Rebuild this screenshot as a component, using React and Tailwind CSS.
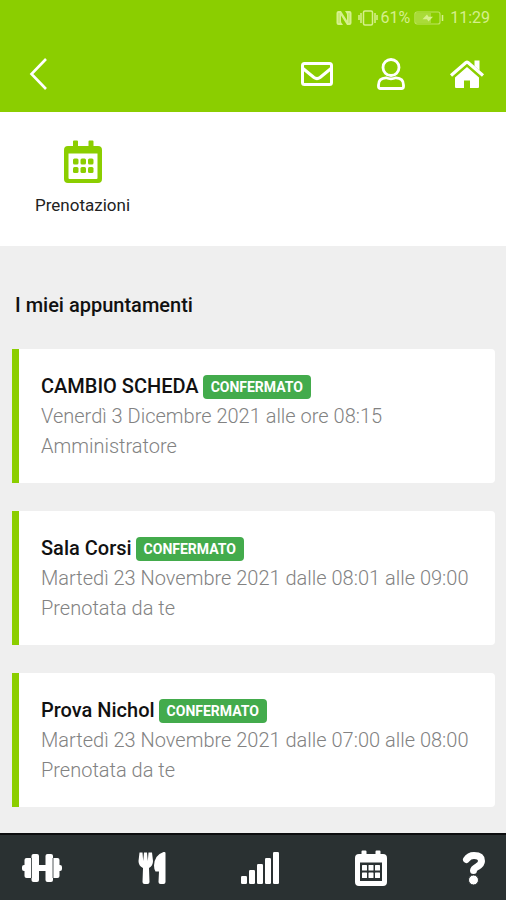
import React from 'react';

const appointments = [
  {
    id: 1,
    title: 'CAMBIO SCHEDA',
    status: 'CONFERMATO',
    when: 'Venerdì 3 Dicembre 2021 alle ore 08:15',
    who: 'Amministratore'
  },
  {
    id: 2,
    title: 'Sala Corsi',
    status: 'CONFERMATO',
    when: 'Martedì 23 Novembre 2021 dalle 08:01 alle 09:00',
    who: 'Prenotata da te'
  },
  {
    id: 3,
    title: 'Prova Nichol',
    status: 'CONFERMATO',
    when: 'Martedì 23 Novembre 2021 dalle 07:00 alle 08:00',
    who: 'Prenotata da te'
  }
];

// Status bar icons
function NfcIcon() {
  return (
    <svg viewBox="0 0 16 16" className="w-4 h-4" fill="currentColor">
      <path d="M2.500 1H5l6 9.500V5q0-1.500-1-2.500L9 1h4.500Q15.500 1 15.500 3v10q0 2-2 2H11L5 5.500V11q0 1.500 1 2.500L7 15H2.500q-2 0-2-2V3q0-2 2-2z" />
      <path d="M3 3v10M13 3v10" stroke="#8bce00" strokeWidth="0.400" />
    </svg>
  );
}

function VibrateIcon() {
  return (
    <svg viewBox="0 0 20 16" className="w-5 h-4" fill="none" stroke="currentColor" strokeWidth="1.500">
      <rect x="5.500" y="1" width="9" height="14" rx="1.500" />
      <path d="M3 3v10M17 3v10M1 5v5M19 5v5" />
    </svg>
  );
}

function BatteryIcon() {
  return (
    <svg viewBox="0 0 30 14" className="w-[30px] h-3.5">
      <rect x="1" y="1" width="25" height="12" rx="2" fill="none" stroke="currentColor" strokeWidth="1.200" opacity="0.700" />
      <rect x="2" y="2" width="15" height="10" fill="currentColor" opacity="0.400" />
      <path d="M13 3.500l1.500 2.200H19L14.500 10.500 13 8.300H8.500z" fill="currentColor" />
      <path d="M28.500 4v6" stroke="currentColor" strokeWidth="1.500" />
    </svg>
  );
}

// Header icons
function BackIcon() {
  return (
    <svg viewBox="0 0 20 34" className="w-5 h-[34px]" fill="none" stroke="currentColor" strokeWidth="2.600">
      <path d="M17 2L2.500 17 17 32" />
    </svg>
  );
}

function MailIcon() {
  return (
    <svg viewBox="0 0 32 24" className="w-8 h-6" fill="none" stroke="currentColor" strokeWidth="3" strokeLinejoin="round">
      <rect x="1.500" y="1.500" width="29" height="21" rx="2" />
      <path d="M2 6.500l11 9q3 2.200 6 0l11-9" />
    </svg>
  );
}

function UserIcon() {
  return (
    <svg viewBox="0 0 28 32" className="w-7 h-8" fill="none" stroke="currentColor" strokeWidth="2.800" strokeLinejoin="round">
      <circle cx="14" cy="9.500" r="8" />
      <path d="M9 19.800q5 2 10 0 7.500.2 7.500 7.200v1.500q0 2-2 2h-21q-2 0-2-2V27q0-7 7.500-7.200z" />
    </svg>
  );
}

function HomeIcon() {
  return (
    <svg viewBox="0 0 36 30" className="w-9 h-[30px]" fill="currentColor">
      <path d="M25.500 1.500h5v10l-5-4.500z" />
      <path d="M2 16.500L17 3.500q1-.8 2 0l15 13" fill="none" stroke="currentColor" strokeWidth="3.200" />
      <path d="M18 8l12 10.500V28q0 1-1 1h-8v-7.500h-6V29H7q-1 0-1-1v-9.500z" />
    </svg>
  );
}

function CalendarIcon({ className }) {
  return (
    <svg viewBox="0 0 38 44" className={className} fill="currentColor">
      <path
        fillRule="evenodd"
        d="M9 1.500Q9 .5 10 .5h3q1 0 1 1V6h10.500V1.500q0-1 1-1h3q1 0 1 1V6H34q4 0 4 4v29q0 4-4 4H4q-4 0-4-4V10q0-4 4-4h5zM4.500 13.500v24.500q0 1 1 1h27q1 0 1-1V13.500z"
      />
      <rect x="9" y="18.500" width="5.500" height="6" rx="1.500" />
      <rect x="16.500" y="18.500" width="5.500" height="6" rx="1.500" />
      <rect x="24" y="18.500" width="5.500" height="6" rx="1.500" />
      <rect x="9" y="27" width="5.500" height="6" rx="1.500" />
      <rect x="16.500" y="27" width="5.500" height="6" rx="1.500" />
      <rect x="24" y="27" width="5.500" height="6" rx="1.500" />
    </svg>
  );
}

// Bottom navigation icons
function DumbbellIcon() {
  return (
    <svg viewBox="0 0 40 30" className="w-10 h-[30px]" fill="currentColor">
      <rect x="0" y="12" width="40" height="6" rx="2" />
      <rect x="2.500" y="5" width="8" height="20" rx="2" />
      <rect x="29.500" y="5" width="8" height="20" rx="2" />
      <rect x="9.500" y="1" width="7.500" height="28" rx="2" />
      <rect x="23.500" y="1" width="7.500" height="28" rx="2" />
      <path d="M9.500 5v20M31 5v20" stroke="#2a3132" strokeWidth="0.800" />
    </svg>
  );
}

function UtensilsIcon() {
  return (
    <svg viewBox="0 0 28 34" className="w-7 h-[34px]" fill="currentColor">
      <path d="M1.500 1.500h3L5.200 10 6 1.500h3L9.800 10l.7-8.500H14L15 10q0 5-4 7l.5 14q0 2-2 2h-3q-2 0-2-2L5 17q-4.500-2-4.500-7z" />
      <path d="M27.500 2v29q0 2-2 2h-3q-2 0-2-2l.5-10.500h-3.500q-1.500-2-1.500-6Q16.500 4 25.500 1q2-.5 2 1z" />
    </svg>
  );
}

function SignalIcon() {
  return (
    <svg viewBox="0 0 38 34" className="w-[38px] h-[34px]" fill="currentColor">
      <rect x="0" y="25" width="6" height="8" rx="1.200" />
      <rect x="8" y="19" width="6" height="14" rx="1.200" />
      <rect x="16" y="13" width="6" height="20" rx="1.200" />
      <rect x="24" y="7" width="6" height="26" rx="1.200" />
      <rect x="32" y="1" width="6" height="32" rx="1.200" />
    </svg>
  );
}

function AgendaIcon() {
  return (
    <svg viewBox="0 0 32 36" className="w-8 h-9" fill="currentColor">
      <path
        fillRule="evenodd"
        d="M6.500 1.500q0-1 1-1h3q1 0 1 1V4h9V1.500q0-1 1-1h3q1 0 1 1V4H28q4 0 4 4v24q0 4-4 4H4q-4 0-4-4V8q0-4 4-4h2.500zM5 12.500V31h22V12.500z"
      />
      <rect x="7" y="15" width="5" height="5.500" rx="0.500" />
      <rect x="13.500" y="15" width="5" height="5.500" rx="0.500" />
      <rect x="20" y="15" width="5" height="5.500" rx="0.500" />
      <rect x="7" y="22.500" width="5" height="5.500" rx="0.500" />
      <rect x="13.500" y="22.500" width="5" height="5.500" rx="0.500" />
      <rect x="20" y="22.500" width="5" height="5.500" rx="0.500" />
    </svg>
  );
}

function HelpIcon() {
  return (
    <svg viewBox="0 0 24 34" className="w-6 h-[34px]" fill="none" stroke="currentColor" strokeWidth="7">
      <path d="M4.500 8.500Q7 4.500 12 4.500q7.500 0 7.500 5.500 0 3-4 5.500-4 2.200-4 4" strokeLinecap="round" strokeLinejoin="round" />
      <circle cx="11.500" cy="29" r="5" fill="currentColor" stroke="#2a3132" strokeWidth="1" />
    </svg>
  );
}

const navItems = [
  { id: 'workout', label: 'Allenamento', icon: DumbbellIcon },
  { id: 'diet', label: 'Dieta', icon: UtensilsIcon },
  { id: 'progress', label: 'Progressi', icon: SignalIcon },
  { id: 'agenda', label: 'Agenda', icon: AgendaIcon },
  { id: 'help', label: 'Aiuto', icon: HelpIcon }
];

function AppointmentCard({ title, status, when, who }) {
  return (
    <li className="bg-white border-l-[7px] border-[#8bce00] rounded-r-sm pl-[22px] pr-3 py-[22px] text-xl leading-[30px] text-[#828282]">
      <div className="flex items-center gap-1">
        <h3 className="font-medium text-[#111111]">{title}</h3>
        <span className="mt-0.5 rounded bg-[#43ab4c] px-2 text-sm leading-6 font-bold text-white">
          {status}
        </span>
      </div>
      <p className="font-light">{when}</p>
      <p className="font-light">{who}</p>
    </li>
  );
}

export default function App() {
  return (
    <div className="min-h-screen flex flex-col bg-[#efefef] font-['Roboto',sans-serif]">
      <header className="bg-[#8bce00] text-white">
        <div className="h-9 flex items-center justify-end pr-4 text-base text-[#d6f08c]">
          <NfcIcon />
          <div className="ml-1.5 mr-0.5">
            <VibrateIcon />
          </div>
          <span>61%</span>
          <div className="ml-1 mr-1.5">
            <BatteryIcon />
          </div>
          <span>11:29</span>
        </div>
        <div className="h-[76px] flex items-center justify-between pl-[29px] pr-[21px]">
          <button type="button" aria-label="Indietro">
            <BackIcon />
          </button>
          <div className="flex items-center gap-11">
            <button type="button" aria-label="Messaggi">
              <MailIcon />
            </button>
            <button type="button" aria-label="Profilo">
              <UserIcon />
            </button>
            <button type="button" aria-label="Home">
              <HomeIcon />
            </button>
          </div>
        </div>
      </header>

      <section className="h-[134px] bg-white flex items-start px-[35px] pt-7">
        <button type="button" className="flex flex-col items-center gap-[9px] text-[#222222]">
          <CalendarIcon className="w-[38px] h-11 text-[#8bce00]" />
          <span className="text-[17px] leading-6">Prenotazioni</span>
        </button>
      </section>

      <main className="grow pl-3 pr-[11px] pt-11 pb-[26px]">
        <h2 className="pl-[3px] text-xl leading-[30px] font-medium text-[#111111]">I miei appuntamenti</h2>
        <ul className="mt-[29px] flex flex-col gap-7">
          {appointments.map((item) => (
            <AppointmentCard key={item.id} {...item} />
          ))}
        </ul>
      </main>

      <nav className="sticky bottom-0 h-[67px] flex items-center justify-between border-t-2 border-[#0c0e0f] bg-[#2a3132] pl-[22px] pr-5 text-white">
        {navItems.map(({ id, label, icon: Icon }) => (
          <button key={id} type="button" aria-label={label}>
            <Icon />
          </button>
        ))}
      </nav>
    </div>
  );
}
